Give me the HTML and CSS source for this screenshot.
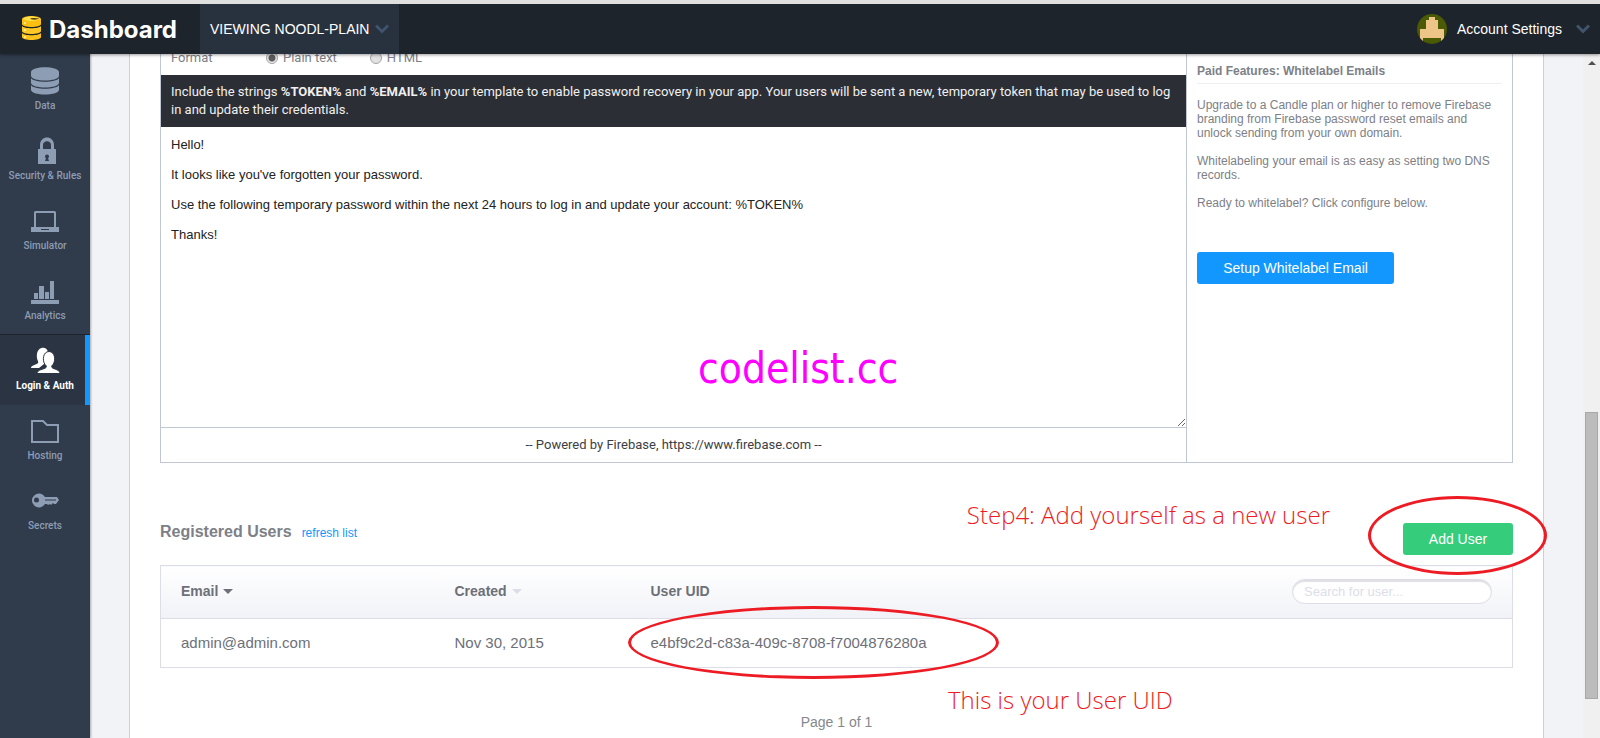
FILE: index.html
```html
<!DOCTYPE html>
<html lang="en">
<head>
<meta charset="utf-8">
<title>Dashboard</title>
<link rel="stylesheet" href="styles.css">
</head>
<body>
<header class="topbar">
  <a class="brand" href="#">
    <svg class="brand-icon" viewBox="0 0 22 26" width="22" height="26" aria-hidden="true">
      <path d="M1 18v4c0 4 19 4 19 0v-4c-2 3-17 3-19 0z" fill="#fcc21b"/>
      <path d="M1 11v5c0 4 19 4 19 0v-5c-2 3-17 3-19 0z" fill="#fdc825"/>
      <path d="M1 4v5c0 4 19 4 19 0V4C19 0 2 0 1 4z" fill="#fdc010"/>
      <path d="M2 4c2-3 10-3 12-2 2 0 4 1 5 2-3 2-13 3-17 0z" fill="#ffe14d"/>
      <path d="M9 4c2-2 5 0 9-1-1 2-5 2-9 1z" fill="#5a4208"/>
      <path d="M4 7v2M4 14v2M4 21v2" stroke="#ffe98a" stroke-width="2"/>
    </svg>
    <span>Dashboard</span>
  </a>
  <button class="app-switch" type="button"><span>VIEWING NOODL-PLAIN</span>
    <svg class="chevron" viewBox="0 0 14 10" width="14" height="10" aria-hidden="true"><path d="M1 1.500l6 6 6-6"/></svg>
  </button>
  <button class="account" type="button">
    <svg viewBox="0 0 30 30" width="30" height="30" aria-hidden="true">
      <circle cx="15" cy="15" r="15" fill="#4a5a05"/>
      <path d="M12 3h6v3h3v9h6v9l-3 3v-3H6v3l-3-3v-9h6V6h3z" fill="#eec588"/>
    </svg>
    <span>Account Settings</span>
    <svg class="chevron" viewBox="0 0 14 10" width="14" height="10" aria-hidden="true"><path d="M1 1.500l6 6 6-6"/></svg>
  </button>
</header>

<div class="shell">
  <nav class="sidebar">
    <a class="nav-item" href="#">
      <svg viewBox="0 0 28 28" width="28" height="28" aria-hidden="true"><path d="M0 5c0-6.500 28-6.500 28 0v4c-1 6-27 6-28 0zM0 11c3 5 25 5 28 0v5c-1 6-27 6-28 0zM0 18c3 5 25 5 28 0v5c-1 6-27 6-28 0z"/></svg>
      <span>Data</span></a>
    <a class="nav-item" href="#">
      <svg viewBox="0 0 28 28" width="28" height="28" aria-hidden="true"><path fill-rule="evenodd" d="M7 12h2V8c0-10 14-10 14 0v4h1c1 0 1 0 1 1v14H7zm5 0h8V8c0-5-8-5-8 0zm4 5.500a2 2 0 0 0-2 2c0 1 1 1.500 1 1.500l-1 3h4l-1-3s1-.5 1-1.500a2 2 0 0 0-2-2z"/></svg>
      <span>Security &amp; Rules</span></a>
    <a class="nav-item" href="#">
      <svg viewBox="0 0 28 28" width="28" height="28" aria-hidden="true"><path fill-rule="evenodd" d="M3 20V6c0-1 0-2 2-2h18c2 0 2 1 2 2v14h3v5H0v-5zm2 0h18V6H5zm5 2v1h8v-1z"/></svg>
      <span>Simulator</span></a>
    <a class="nav-item" href="#">
      <svg viewBox="0 0 28 28" width="28" height="28" aria-hidden="true"><path d="M0 23h28v4H0zM3 16h4v6H3zM8 9h5v13H8zM14 15h4v7h-4zM19 4h4v18h-4z"/></svg>
      <span>Analytics</span></a>
    <a class="nav-item active" href="#" aria-current="page">
      <svg viewBox="0 0 29 28" width="29" height="28" aria-hidden="true"><path d="M0 21c0-3 5-3 7-5 1-2-2-3-1-9 1-8 10-8 11-2l-4 3v9l-5 4z"/><path d="M6 26.500c0-4 7-4 9-6 1-1 0-2-1-3-3-4-2-13 4-13s7 9 4 13c-1 1-2 2-1 3 2 2 8 2 8 6z" stroke="#2b3442" stroke-width="1"/></svg>
      <span>Login &amp; Auth</span></a>
    <a class="nav-item" href="#">
      <svg viewBox="0 0 28 28" width="28" height="28" aria-hidden="true"><path fill="none" stroke="#8d9db3" stroke-width="2" d="M1 4h11l4 4h11v17H1z"/></svg>
      <span>Hosting</span></a>
    <a class="nav-item" href="#">
      <svg viewBox="0 0 28 28" width="28" height="28" aria-hidden="true"><path fill-rule="evenodd" d="M14 10h12l2 3-3 4h-2l-1-1-2 2-1-1-2 1-1-1h-2A7 7 0 1 1 14 10zM5.500 10.500a2.500 2.500 0 1 0 0 5 2.500 2.500 0 0 0 0-5z"/><path d="M14 13h11" stroke="#303b4b"/></svg>
      <span>Secrets</span></a>
  </nav>

  <div class="viewport">
    <main class="page">
      <section class="email-panel">
        <form class="template">
          <div class="format">
            <span class="format-label">Format</span>
            <label><input type="radio" name="format" checked>Plain text</label>
            <label><input type="radio" name="format">HTML</label>
          </div>
          <p class="hint">Include the strings <b>%TOKEN%</b> and <b>%EMAIL%</b> in your template to enable password recovery in your app. Your users will be sent a new, temporary token that may be used to log in and update their credentials.</p>
          <div class="message">
            <textarea aria-label="Email message">Hello!

It looks like you've forgotten your password.

Use the following temporary password within the next 24 hours to log in and update your account: %TOKEN%

Thanks!</textarea>
            <span class="watermark">codelist.cc</span>
          </div>
          <p class="signature">-- Powered by Firebase, https://www.firebase.com --</p>
        </form>
        <aside class="paid">
          <h3>Paid Features: Whitelabel Emails</h3>
          <p>Upgrade to a Candle plan or higher to remove Firebase branding from Firebase password reset emails and unlock sending from your own domain.</p>
          <p>Whitelabeling your email is as easy as setting two DNS records.</p>
          <p>Ready to whitelabel? Click configure below.</p>
          <button class="btn btn-blue" type="button">Setup Whitelabel Email</button>
        </aside>
      </section>

      <section class="users">
        <div class="users-head">
          <div class="users-title">
            <h2>Registered Users</h2>
            <a href="#">refresh list</a>
          </div>
          <span class="note note-step">Step4: Add yourself as a new user</span>
          <div class="add-wrap"><button class="btn btn-green" type="button">Add User</button><span class="ring ring-add"></span></div>
        </div>
        <table class="user-table">
          <thead><tr>
            <th class="col-email">Email <span class="sort"></span></th>
            <th class="col-created">Created <span class="sort idle"></span></th>
            <th>User UID</th>
            <th class="col-search"><input type="search" aria-label="Search for user" placeholder="Search for user..."></th>
          </tr></thead>
          <tbody><tr>
            <td>admin@admin.com</td>
            <td>Nov 30, 2015</td>
            <td class="uid" colspan="2">e4bf9c2d-c83a-409c-8708-f7004876280a<span class="ring ring-uid"></span></td>
          </tr></tbody>
        </table>
        <div class="pager">Page 1 of 1<span class="note note-uid">This is your User UID</span></div>
      </section>
    </main>
  </div>
  <div class="scrollbar" aria-hidden="true"><span class="arrow"></span><span class="thumb"></span></div>
</div>
</body>
</html>
```
FILE: styles.css
```css
* { box-sizing: border-box; }
body {
  margin: 0;
  height: 100vh;
  display: flex;
  flex-direction: column;
  overflow: hidden;
  font-family: "Liberation Sans", Arial, sans-serif;
  color: #6d7078;
  background: #f1f3f7;
}
p, h2, h3 { margin: 0; }
a { text-decoration: none; }
button { font-family: inherit; border: 0; cursor: pointer; }

.topbar {
  flex: none;
  height: 54px;
  display: flex;
  background: #1e242b;
  border-top: 4px solid #e0e0e0;
  box-shadow: 0 1px 3px rgba(0, 0, 0, .4);
  position: relative;
  z-index: 2;
}
.brand {
  width: 200px;
  padding-left: 21px;
  display: flex;
  align-items: center;
  gap: 6px;
  color: #fff;
  font: bold 24px Inter, sans-serif;
}
.brand-icon { margin-bottom: 2px; }
.app-switch {
  display: flex;
  align-items: center;
  gap: 6px;
  padding: 0 10px;
  background: #28323e;
  color: #fff;
  font-size: 14px;
}
.chevron { fill: none; stroke: #41546d; stroke-width: 3; }
.account {
  margin-left: auto;
  padding: 0 10px 0 0;
  display: flex;
  align-items: center;
  gap: 10px;
  background: none;
  color: #fff;
  font-size: 14px;
}
.account .chevron { margin-left: 4px; }

.shell { flex: 1; min-height: 0; display: flex; }
.sidebar {
  flex: none;
  width: 90px;
  padding-top: 1px;
  background: #303b4b;
  box-shadow: 1px 0 2px rgba(0, 0, 0, .3);
}
.nav-item {
  height: 70px;
  padding-top: 12px;
  display: flex;
  flex-direction: column;
  align-items: center;
  gap: 5px;
  color: #8d9db3;
  fill: #8d9db3;
  font: 500 10px/12px Roboto, sans-serif;
}
.nav-item.active {
  color: #fff;
  fill: #fff;
  background: #2b3442;
  box-shadow: inset -5px 0 #1297ff, 0 -1px #1e242b;
  font-weight: 700;
}

.viewport { flex: 1; min-width: 0; overflow: hidden; padding: 0 39px; }
.page {
  min-height: 100%;
  padding: 0 30px;
  background: #fff;
  border: solid #cdcfd6;
  border-width: 0 1px;
}

.email-panel { display: flex; border: 1px solid #c0c6d4; border-top: 0; }
.template { flex: 1; min-width: 0; }
.format {
  display: flex;
  margin-top: -4px;
  padding: 0 10px 9px;
  color: #7d8086;
  font: 13px/16px Roboto, sans-serif;
}
.format-label { width: 95px; }
.format label { display: flex; align-items: center; gap: 5px; margin-right: 33px; }
.format input {
  appearance: none;
  width: 12px;
  height: 12px;
  margin: 0;
  border: 1px solid #a5a5a5;
  border-radius: 50%;
  background: #e2e2e2;
}
.format input:checked { background: radial-gradient(circle, #5c5c5c 3px, #e6e6e6 4px); }
.hint {
  padding: 8px 10px;
  background: #2b2e35;
  color: #f0f0f0;
  font: 13px/18px Roboto, sans-serif;
}
.message { position: relative; display: flex; }
.message textarea {
  flex: 1;
  height: 300px;
  padding: 10px;
  border: 0;
  outline: 0;
  background: #fff;
  color: #222;
  font: 13px/15px "Liberation Sans", Arial, sans-serif;
}
.watermark {
  position: absolute;
  left: 537px;
  top: 217px;
  color: #f0f;
  font: 42px/50px "DejaVu Sans Condensed", "DejaVu Sans", sans-serif;
}
.signature {
  border-top: 1px solid #c0c6d4;
  color: #3c3e44;
  font: 13px/34px Roboto, sans-serif;
  text-align: center;
}
.paid {
  width: 326px;
  padding: 9px 10px;
  border-left: 1px solid #c0c6d4;
  color: #7d8086;
  font-size: 12px;
  line-height: 14px;
}
.paid h3 {
  margin-bottom: 14px;
  padding-bottom: 3px;
  border-bottom: 1px solid #eeeff2;
  font-size: 12px;
  line-height: 17px;
}
.paid p { margin-bottom: 14px; }
.btn {
  height: 32px;
  border-radius: 3px;
  color: #fff;
  font-size: 14px;
}
.btn-blue { width: 197px; margin-top: 28px; background: #1297ff; }
.btn-green { width: 110px; background: #35cd7c; }

.users { padding-top: 60px; }
.users-head { display: flex; position: relative; }
.users-title { display: flex; align-items: baseline; gap: 10px; }
.users h2 { font-size: 16px; line-height: 18px; color: #7d8086; }
.users-head a { color: #1297ff; font-size: 12px; }
.add-wrap { position: relative; margin-left: auto; }
.ring {
  position: absolute;
  border: 3px solid #ed1c24;
  border-radius: 50%;
  pointer-events: none;
  z-index: 1;
}
.ring-add { width: 179px; height: 79px; left: -35px; top: -27px; }
.ring-uid { width: 371px; height: 73px; left: -3px; top: -13px; }
.note {
  position: absolute;
  color: #ed1c24;
  font: 300 24px/32px "Open Sans", sans-serif;
  white-space: nowrap;
}
.note-step { right: 183px; top: -24px; }
.note-uid { left: 788px; top: 16px; }

.user-table {
  width: 100%;
  margin-top: 10px;
  border-collapse: collapse;
  border: 1px solid #dddde8;
  font-size: 15px;
  text-align: left;
}
.user-table th {
  height: 53px;
  padding: 0 20px 2px;
  background: linear-gradient(#fff, #f1f2f7);
  border-bottom: 1px solid #dddde8;
  font-size: 14px;
}
.user-table td { height: 49px; padding: 0 20px 2px; }
.user-table .uid { position: relative; }
.col-email { width: 274px; }
.col-created { width: 196px; }
.user-table .col-search { text-align: right; }
.sort {
  display: inline-block;
  border: 5px solid transparent;
  border-top-color: #6d7078;
  border-bottom: 0;
  margin-left: 1px;
  vertical-align: 2px;
}
.sort.idle { border-top-color: #dddde8; }
.col-search input {
  width: 200px;
  height: 25px;
  padding: 0 11px;
  border: 1px solid #dddde8;
  border-radius: 13px;
  box-shadow: inset 0 2px 1px #e0e0e4;
  background: #fff;
  font: 13px "Liberation Sans", Arial, sans-serif;
}
.col-search input::placeholder { color: #dddde8; }
.pager { position: relative; padding-top: 46px; text-align: center; font-size: 14px; line-height: 16px; color: #85888e; }

.scrollbar {
  flex: none;
  width: 17px;
  display: flex;
  flex-direction: column;
  align-items: center;
  background: #f0f0f0;
}
.arrow {
  margin-top: 7px;
  border: 4px solid transparent;
  border-top: 0;
  border-bottom-color: #505050;
}
.thumb { width: 13px; height: 42%; margin-top: 347px; background: #bcbcbc; border: 1px solid #a8a8a8; }
```
